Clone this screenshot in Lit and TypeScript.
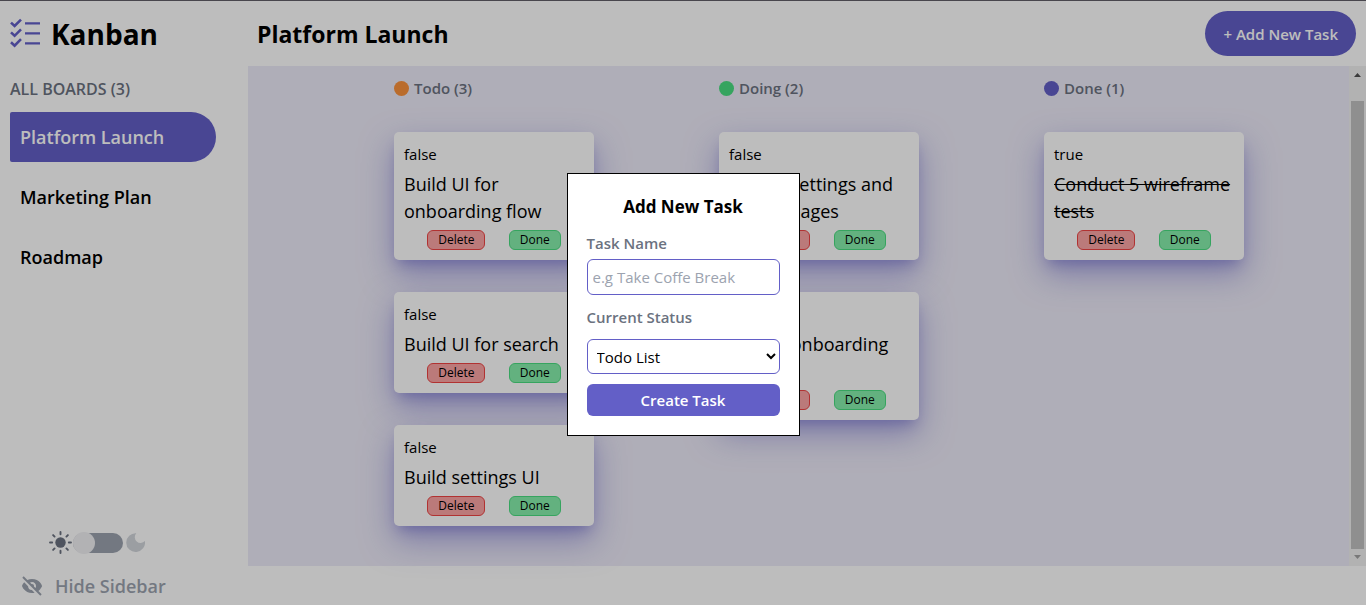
import { LitElement, html, css } from "lit";
import { customElement, property } from "lit/decorators.js";

interface Task {
  title: string;
  done: boolean;
}

interface Column {
  name: string;
  tone: string;
  tasks: Task[];
}

const BOARDS = ["Platform Launch", "Marketing Plan", "Roadmap"];

const COLUMNS: Column[] = [
  {
    name: "Todo",
    tone: "todo",
    tasks: [
      { title: "Build UI for onboarding flow", done: false },
      { title: "Build UI for search", done: false },
      { title: "Build settings UI", done: false },
    ],
  },
  {
    name: "Doing",
    tone: "doing",
    tasks: [
      { title: "Design settings and search pages", done: false },
      { title: "Design onboarding flow", done: false },
    ],
  },
  {
    name: "Done",
    tone: "done",
    tasks: [{ title: "Conduct 5 wireframe tests", done: true }],
  },
];

const reset = css`
  *,
  *::before,
  *::after {
    box-sizing: border-box;
  }
  h1, h2, h3, p, ul {
    margin: 0;
    padding: 0;
  }
  ul {
    list-style: none;
  }
  button, input, select {
    font: inherit;
    margin: 0;
  }
`;

@customElement("task-card")
export class TaskCard extends LitElement {
  @property({ attribute: false }) task!: Task;

  static styles = [
    reset,
    css`
      :host {
        display: block;
      }
      .card {
        display: flex;
        flex-direction: column;
        gap: 5px;
        padding: 10px;
        border-radius: 5px;
        background: #fff;
        box-shadow:
          0 14px 32px 0 rgba(99, 95, 199, 0.5),
          0 8px 12px -5px rgba(99, 95, 199, 0.45);
      }
      .state {
        line-height: 24px;
      }
      .title {
        font-size: 18px;
        font-weight: 500;
        line-height: 27px;
      }
      .struck {
        text-decoration: line-through;
      }
      .actions {
        display: flex;
        justify-content: space-evenly;
      }
      .action {
        height: 20px;
        padding: 0 10px;
        border: 1px solid;
        border-radius: 6px;
        font-size: 12px;
        font-weight: 500;
        line-height: 18px;
        color: #000;
      }
      .delete {
        background: #fca5a5;
        border-color: #ef4444;
      }
      .finish {
        background: #86efac;
        border-color: #4ade80;
      }
    `,
  ];

  render() {
    const { title, done } = this.task;
    return html`
      <article class="card">
        <p class="state">${String(done)}</p>
        <h3 class="title ${done ? "struck" : ""}">${title}</h3>
        <div class="actions">
          <button class="action delete" type="button">Delete</button>
          <button class="action finish" type="button">Done</button>
        </div>
      </article>
    `;
  }
}

@customElement("board-sidebar")
export class BoardSidebar extends LitElement {
  static styles = [
    reset,
    css`
      :host {
        display: flex;
        flex-direction: column;
        padding: 0 32px 0 10px;
      }
      .brand {
        display: flex;
        align-items: center;
        gap: 10px;
        height: 65px;
        font-size: 28px;
        font-weight: 700;
      }
      .caption {
        height: 46px;
        font-size: 16px;
        font-weight: 600;
        line-height: 46px;
        color: #6b7280;
      }
      .boards {
        display: grid;
        gap: 10px;
      }
      .board {
        display: block;
        padding: 0 10px;
        border-radius: 2px 25px 25px 2px;
        font-size: 18px;
        font-weight: 600;
        line-height: 50px;
        color: #000;
        text-decoration: none;
      }
      .current {
        background: #635fc7;
        color: #fff;
      }
      .theme {
        display: flex;
        align-items: center;
        gap: 1px;
        margin-top: auto;
        padding-left: 39px;
      }
      .switch {
        appearance: none;
        display: flex;
        align-items: center;
        width: 50px;
        height: 20px;
        margin: 0;
        border-radius: 10px;
        background: #9ca3af;
      }
      .switch::before {
        content: "";
        flex: none;
        width: 22px;
        height: 22px;
        border-radius: 50%;
        background: #f0f0f3;
      }
      .moon {
        margin-left: 2px;
      }
      .hide {
        display: flex;
        align-items: center;
        gap: 11px;
        height: 38px;
        margin-top: 13px;
        padding: 0 10px;
        border: 0;
        background: none;
        font-size: 18px;
        font-weight: 600;
        color: #9ca3af;
      }
    `,
  ];

  render() {
    return html`
      <header class="brand">
        <svg width="31" height="31" viewBox="0 0 31 31" fill="none" stroke="#635fc7" aria-hidden="true">
          <path stroke-width="2.6" d="M1 4.6 4.6 8 11 1.6M1 14.4 4.6 17.8 11 11.4M1 24.2 4.6 27.6 11 21.2" />
          <path stroke-width="2.2" d="M15 5.3H30M15 15.3H30M15 25.3H30" />
        </svg>
        <span>Kanban</span>
      </header>
      <h2 class="caption">ALL BOARDS (3)</h2>
      <nav>
        <ul class="boards">
          ${BOARDS.map(
            (name, i) => html`<li><a class="board ${i === 0 ? "current" : ""}" href="#">${name}</a></li>`,
          )}
        </ul>
      </nav>
      <div class="theme">
        <svg width="23" height="23" viewBox="0 0 23 23" fill="none" stroke="#6b7280" stroke-width="1.9" stroke-linecap="round" aria-hidden="true">
          <circle cx="11.5" cy="11.5" r="5.2" fill="#6b7280" stroke="none" />
          <path d="M11.5 1V3.2M11.5 19.8V22M1 11.5H3.2M19.8 11.5H22M4.1 4.1 5.6 5.6M17.4 17.4 18.9 18.9M4.1 18.9 5.6 17.4M17.4 5.6 18.9 4.1" />
        </svg>
        <input class="switch" type="checkbox" role="switch" aria-label="Dark mode" />
        <svg class="moon" width="19" height="19" viewBox="0 0 19 19" aria-hidden="true">
          <path fill="#d1d5db" d="M10.3 .2A9.4 9.4 0 1 0 18.9 8 5.8 5.8 0 0 1 10.3 .2Z" />
        </svg>
      </div>
      <button class="hide" type="button">
        <svg width="24" height="24" viewBox="0 0 24 24" fill="#9ca3af" aria-hidden="true">
          <path d="M8.073 12.194 4.212 8.333c-1.52 1.657-2.096 3.317-2.106 3.351L2 12l.105.316C2.127 12.383 4.421 19 12.054 19c.929 0 1.775-.102 2.552-.273l-2.746-2.746a3.987 3.987 0 0 1-3.787-3.787zM12.054 5c-1.855 0-3.375.404-4.642.998L3.707 2.293 2.293 3.707l18 18 1.414-1.414-3.298-3.298c2.638-1.953 3.579-4.637 3.593-4.679L22.107 12l-.105-.316C21.98 11.617 19.687 5 12.054 5zm1.906 7.546c.187-.677.028-1.439-.492-1.96s-1.283-.679-1.96-.492L10 8.586A3.955 3.955 0 0 1 12.054 8c2.206 0 4 1.794 4 4a3.94 3.94 0 0 1-.587 2.053l-1.507-1.507z" />
        </svg>
        Hide Sidebar
      </button>
    `;
  }
}

@customElement("add-task-dialog")
export class AddTaskDialog extends LitElement {
  static styles = [
    reset,
    css`
      :host {
        position: fixed;
        inset: 0;
        display: grid;
        place-items: center;
        padding-top: 4px;
        background: rgba(0, 0, 0, 0.26);
      }
      .panel {
        display: flex;
        flex-direction: column;
        gap: 10px;
        width: 233px;
        padding: 19px;
        border: 1px solid #000;
        background: #fff;
      }
      .heading {
        font-size: 17px;
        font-weight: 700;
        line-height: 28px;
        text-align: center;
      }
      .group {
        display: grid;
        gap: 4px;
      }
      .roomy {
        gap: 10px;
      }
      .label {
        font-weight: 600;
        line-height: 24px;
        color: #6b7280;
      }
      .field {
        width: 100%;
        height: 36px;
        padding: 0 5px;
        border: 1px solid #635fc7;
        border-radius: 6px;
        background: #fff;
        color: #000;
      }
      .choice {
        height: 35px;
      }
      .field::placeholder {
        color: #9ca3af;
        opacity: 1;
      }
      .submit {
        height: 32px;
        border: 0;
        border-radius: 6px;
        background: #635fc7;
        font-weight: 600;
        color: #fff;
      }
    `,
  ];

  render() {
    return html`
      <form class="panel" role="dialog" aria-labelledby="heading">
        <h2 class="heading" id="heading">Add New Task</h2>
        <div class="group">
          <label class="label" for="name">Task Name</label>
          <input class="field" id="name" type="text" placeholder="e.g Take Coffe Break" />
        </div>
        <div class="group roomy">
          <label class="label" for="status">Current Status</label>
          <select class="field choice" id="status">
            <option>Todo List</option>
            <option>Doing List</option>
            <option>Done List</option>
          </select>
        </div>
        <button class="submit" type="button">Create Task</button>
      </form>
    `;
  }
}

@customElement("app-root")
export class AppRoot extends LitElement {
  static styles = [
    reset,
    css`
      :host {
        display: block;
        font-family: "Open Sans", "Segoe UI", sans-serif;
        font-size: 15px;
        line-height: 24px;
        color: #000;
      }
      .shell {
        display: grid;
        grid-template-columns: 248px 1fr;
        min-height: 100vh;
        border-top: 1px solid #625f68;
        background: #fff;
      }
      .main {
        display: flex;
        flex-direction: column;
        min-width: 0;
        padding-bottom: 39px;
      }
      .topbar {
        display: flex;
        align-items: center;
        justify-content: space-between;
        height: 65px;
        padding: 0 10px 0 9px;
      }
      .name {
        font-size: 23px;
        font-weight: 700;
      }
      .add {
        height: 45px;
        padding: 0 18px;
        border: 0;
        border-radius: 23px;
        background: #635fc7;
        font-weight: 600;
        color: #fff;
      }
      .viewport {
        flex: 1;
        display: grid;
        grid-template-columns: 1fr 17px;
        background: #edebf8;
      }
      .columns {
        display: grid;
        grid-template-columns: repeat(3, 200px);
        justify-content: center;
        gap: 125px;
        padding: 10px 0 40px 41px;
      }
      .column {
        min-width: 0;
      }
      .column-name {
        display: flex;
        align-items: center;
        gap: 5px;
        font-size: 15px;
        font-weight: 600;
        line-height: 24px;
        color: #6b7280;
      }
      .dot {
        width: 15px;
        height: 15px;
        border-radius: 50%;
      }
      .todo {
        background: #fb923c;
      }
      .doing {
        background: #4ade80;
      }
      .done {
        background: #635fc7;
      }
      .cards {
        display: grid;
        gap: 32px;
        margin-top: 32px;
      }
      .rail {
        display: flex;
        flex-direction: column;
        align-items: center;
        background: #f1f1f1;
      }
      .thumb {
        flex: 1;
        width: 13px;
        margin-top: 18px;
        background: #c1c1c1;
      }
    `,
  ];

  render() {
    return html`
      <div class="shell">
        <board-sidebar></board-sidebar>
        <main class="main">
          <header class="topbar">
            <h1 class="name">Platform Launch</h1>
            <button class="add" type="button">+ Add New Task</button>
          </header>
          <div class="viewport">
            <div class="columns">
              ${COLUMNS.map(
                (column) => html`
                  <section class="column">
                    <h2 class="column-name">
                      <span class="dot ${column.tone}"></span>${column.name} (${column.tasks.length})
                    </h2>
                    <div class="cards">
                      ${column.tasks.map((task) => html`<task-card .task=${task}></task-card>`)}
                    </div>
                  </section>
                `,
              )}
            </div>
            <div class="rail" aria-hidden="true">
              <svg width="17" height="17" viewBox="0 0 17 17"><path fill="#505050" d="M5 11 8.5 7 12 11Z" /></svg>
              <div class="thumb"></div>
              <svg width="17" height="17" viewBox="0 0 17 17"><path fill="#a3a3a3" d="M5 6 8.5 10 12 6Z" /></svg>
            </div>
          </div>
        </main>
      </div>
      <add-task-dialog></add-task-dialog>
    `;
  }
}
